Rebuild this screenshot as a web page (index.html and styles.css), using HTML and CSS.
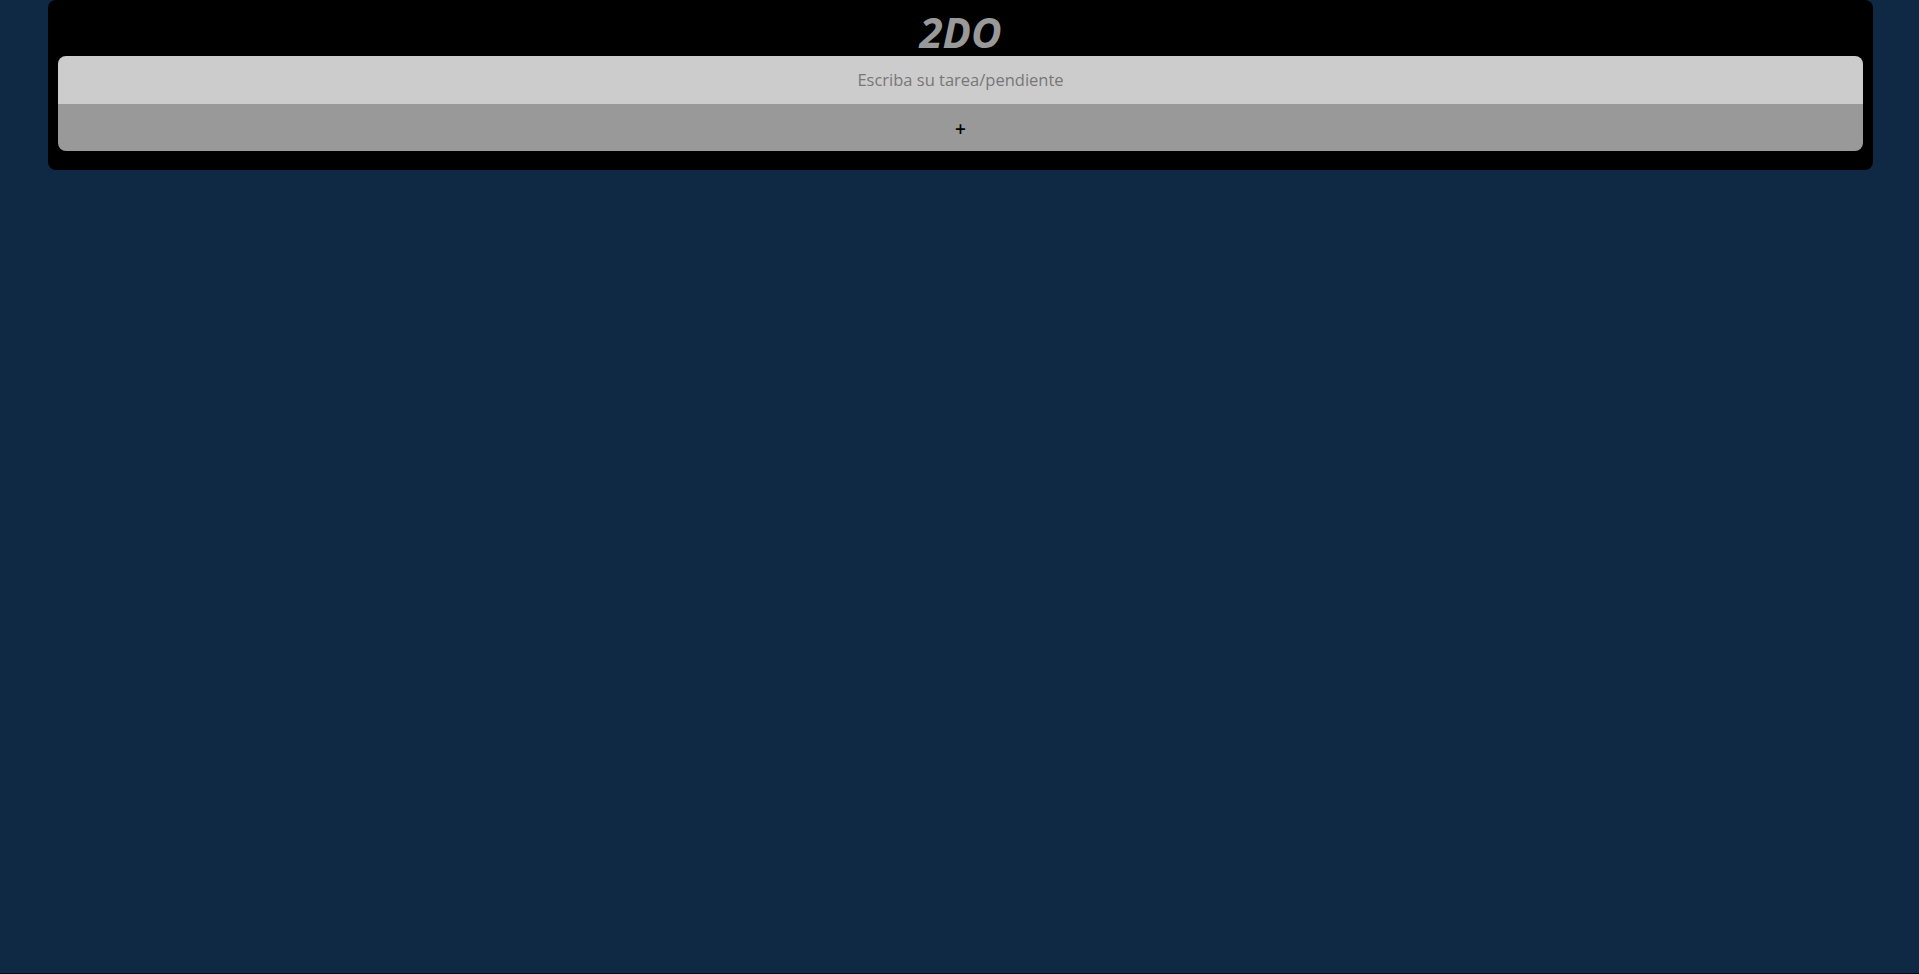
FILE: index.html
```html
<!DOCTYPE html>
<html lang="es">
<head>
<meta charset="utf-8">
<title>2DO</title>
<link rel="stylesheet" href="styles.css">
</head>
<body>
<main class="card">
  <h1 class="title">2DO</h1>
  <form class="todo-form">
    <input class="todo-input" type="text" placeholder="Escriba su tarea/pendiente">
    <button class="todo-add" type="button">+</button>
  </form>
</main>
</body>
</html>
```
FILE: styles.css
```css
html {
  background: #050b14;
  margin: 0;
  padding: 0;
}
body {
  margin: 0;
  height: 973px;
  background: #0f2844;
  font-family: "Open Sans", "Liberation Sans", sans-serif;
  overflow: hidden;
}
.card {
  width: 1805px;
  margin: 0 auto;
  position: relative;
  left: 1px;
  background: #000;
  border-radius: 8px;
  padding: 0 10px 19px;
  display: flex;
  flex-direction: column;
  align-items: center;
}
.title {
  margin: 0;
  height: 56px;
  line-height: 63px;
  font-size: 42px;
  font-weight: 700;
  font-style: italic;
  color: #999;
  letter-spacing: 0;
}
.todo-form {
  width: 100%;
  display: flex;
  flex-direction: column;
}
.todo-input {
  box-sizing: border-box;
  height: 48px;
  border: none;
  outline: none;
  background: #ccc;
  border-radius: 8px 8px 0 0;
  text-align: center;
  font-family: "Open Sans", "Liberation Sans", sans-serif;
  font-size: 16.5px;
  color: #333;
  padding: 0 0 2px;
}
.todo-input::placeholder {
  color: #777;
  opacity: 1;
}
.todo-add {
  height: 47px;
  border: none;
  background: #999;
  border-radius: 0 0 8px 8px;
  font-family: "Open Sans", "Liberation Sans", sans-serif;
  font-size: 19px;
  font-weight: 600;
  color: #000;
  padding: 2px 0 0;
  cursor: pointer;
}
```
